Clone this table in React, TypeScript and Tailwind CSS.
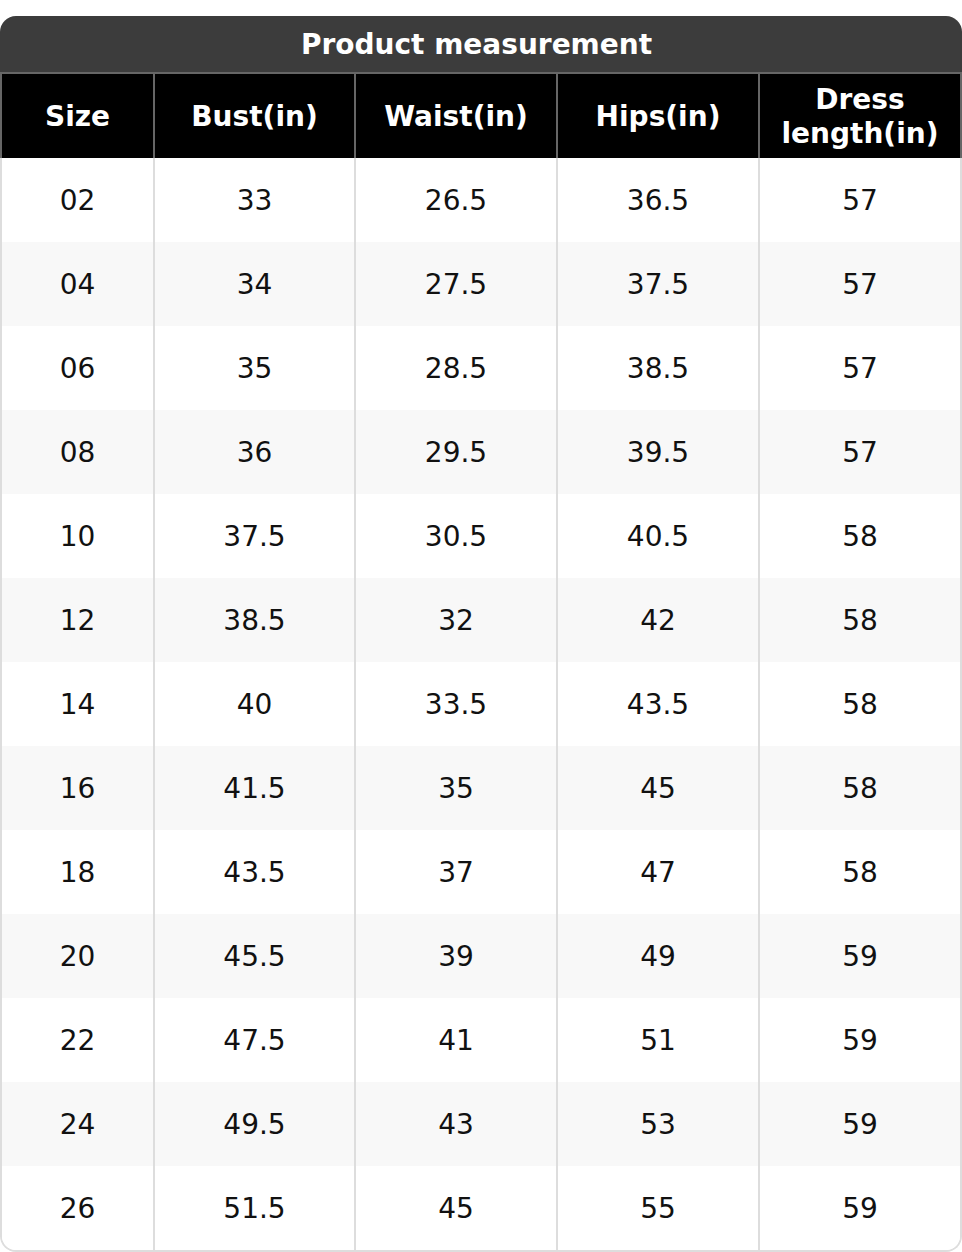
const headers = ["Size", "Bust(in)", "Waist(in)", "Hips(in)", "Dress length(in)"];

const rows = [
  ["02", "33", "26.5", "36.5", "57"],
  ["04", "34", "27.5", "37.5", "57"],
  ["06", "35", "28.5", "38.5", "57"],
  ["08", "36", "29.5", "39.5", "57"],
  ["10", "37.5", "30.5", "40.5", "58"],
  ["12", "38.5", "32", "42", "58"],
  ["14", "40", "33.5", "43.5", "58"],
  ["16", "41.5", "35", "45", "58"],
  ["18", "43.5", "37", "47", "58"],
  ["20", "45.5", "39", "49", "59"],
  ["22", "47.5", "41", "51", "59"],
  ["24", "49.5", "43", "53", "59"],
  ["26", "51.5", "45", "55", "59"],
];

export default function App() {
  return (
    <div
      className="w-[962px] bg-white pt-4 text-[28px]"
      style={{ fontFamily: '"DejaVu Sans", Verdana, sans-serif' }}
    >
      {/* Title bar */}
      <div className="flex h-[56px] items-center justify-center rounded-t-[16px] bg-[#3c3c3c] pt-[2px] pr-[9px] font-bold text-white">
        Product measurement
      </div>

      {/* Header row */}
      <div className="grid grid-cols-[151px_201px_202px_202px_202px] border-x-2 border-t-2 border-[#666] bg-black font-bold text-white">
        {headers.map((h, i) => (
          <div
            key={h}
            className={`flex h-[84px] items-center justify-center px-2 pt-[2px] text-center leading-[1.2] ${
              i > 0 ? "border-l-2 border-[#666]" : ""
            }`}
          >
            {h === "Dress length(in)" ? (
              <span>
                Dress
                <br />
                length(in)
              </span>
            ) : (
              h
            )}
          </div>
        ))}
      </div>

      {/* Body */}
      <div className="overflow-hidden rounded-b-[16px] border-x-2 border-b-2 border-[#ddd] text-[#111]">
        {rows.map((r, ri) => (
          <div
            key={r[0]}
            className={`grid grid-cols-[151px_201px_202px_202px_202px] ${
              ri % 2 === 1 ? "bg-[#f8f8f8]" : "bg-white"
            }`}
          >
            {r.map((v, i) => (
              <div
                key={i}
                className={`flex h-[84px] items-center justify-center pt-[2px] ${
                  i > 0 ? "border-l-2 border-[#ddd]" : ""
                }`}
              >
                {v}
              </div>
            ))}
          </div>
        ))}
      </div>
    </div>
  );
}
